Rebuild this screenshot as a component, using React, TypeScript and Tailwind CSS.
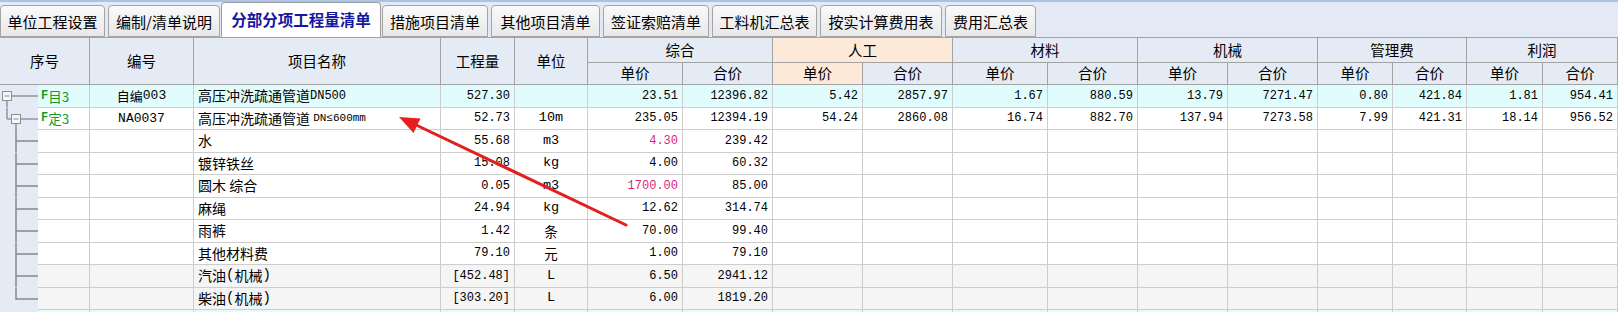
import React from 'react'

const COLS =
  'grid grid-cols-[90px_104px_247px_74px_73px_95px_90px_90px_90px_95px_90px_90px_90px_75px_74px_76px_75px]'

const CJK = "font-['Noto_Sans_CJK_SC',sans-serif]"
const MONO = "font-['Liberation_Mono','Noto_Sans_CJK_SC',monospace]"

const tabs = [
  { label: '单位工程设置', w: 'w-[105px]' },
  { label: '编制/清单说明', w: 'w-[112px]' },
  { label: '分部分项工程量清单', w: 'w-[160px]', active: true },
  { label: '措施项目清单', w: 'w-[106px]' },
  { label: '其他项目清单', w: 'w-[109px]' },
  { label: '签证索赔清单', w: 'w-[106px]' },
  { label: '工料机汇总表', w: 'w-[105px]' },
  { label: '按实计算费用表', w: 'w-[122px]' },
  { label: '费用汇总表', w: 'w-[91px]' },
]

const groups = ['综合', '人工', '材料', '机械', '管理费', '利润']

type Row = {
  tree: 'root' | 'child' | 'leaf' | 'last'
  seq?: string
  code?: React.ReactNode
  name: React.ReactNode
  qty: string
  unit?: React.ReactNode
  vals: string[]
  pink?: number[]
  bg: string
}

const rows: Row[] = [
  {
    tree: 'root',
    seq: 'F目3',
    code: (
      <>
        <span className={CJK}>自编</span>
        <span className={MONO}>003</span>
      </>
    ),
    name: (
      <>
        高压冲洗疏通管道<span className={`${MONO} text-[12px]`}>DN500</span>
      </>
    ),
    qty: '527.30',
    vals: ['23.51', '12396.82', '5.42', '2857.97', '1.67', '880.59', '13.79', '7271.47', '0.80', '421.84', '1.81', '954.41'],
    bg: 'bg-[#e0fcfc]',
  },
  {
    tree: 'child',
    seq: 'F定3',
    code: <span className={MONO}>NA0037</span>,
    name: (
      <>
        高压冲洗疏通管道 <span className={`${MONO} text-[11px]`}>DN≤600mm</span>
      </>
    ),
    qty: '52.73',
    unit: <span className={MONO}>10m</span>,
    vals: ['235.05', '12394.19', '54.24', '2860.08', '16.74', '882.70', '137.94', '7273.58', '7.99', '421.31', '18.14', '956.52'],
    bg: 'bg-white',
  },
  { tree: 'leaf', name: '水', qty: '55.68', unit: <span className={MONO}>m3</span>, vals: ['4.30', '239.42'], pink: [0], bg: 'bg-white' },
  { tree: 'leaf', name: '镀锌铁丝', qty: '15.08', unit: <span className={MONO}>kg</span>, vals: ['4.00', '60.32'], bg: 'bg-white' },
  { tree: 'leaf', name: '圆木 综合', qty: '0.05', unit: <span className={MONO}>m3</span>, vals: ['1700.00', '85.00'], pink: [0], bg: 'bg-white' },
  { tree: 'leaf', name: '麻绳', qty: '24.94', unit: <span className={MONO}>kg</span>, vals: ['12.62', '314.74'], bg: 'bg-white' },
  { tree: 'leaf', name: '雨裤', qty: '1.42', unit: '条', vals: ['70.00', '99.40'], bg: 'bg-white' },
  { tree: 'leaf', name: '其他材料费', qty: '79.10', unit: '元', vals: ['1.00', '79.10'], bg: 'bg-white' },
  {
    tree: 'leaf',
    name: (
      <>
        汽油<span className={MONO}>(</span>机械<span className={MONO}>)</span>
      </>
    ),
    qty: '[452.48]',
    unit: <span className={MONO}>L</span>,
    vals: ['6.50', '2941.12'],
    bg: 'bg-[#f5f5f5]',
  },
  {
    tree: 'last',
    name: (
      <>
        柴油<span className={MONO}>(</span>机械<span className={MONO}>)</span>
      </>
    ),
    qty: '[303.20]',
    unit: <span className={MONO}>L</span>,
    vals: ['6.00', '1819.20'],
    bg: 'bg-[#f5f5f5]',
  },
]

function Tree({ kind }: { kind: Row['tree'] | 'none' }) {
  const s = '#8e8e8e'
  return (
    <svg width="38" height="22.5" viewBox="0 0 38 22.5" className="block">
      {kind === 'root' && (
        <>
          <rect x="2.5" y="6.5" width="9" height="9" fill="#f4f6fa" stroke={s} />
          <line x1="4.5" y1="11" x2="9.5" y2="11" stroke={s} />
          <line x1="12" y1="11" x2="38" y2="11" stroke={s} strokeWidth="1.4" />
          <line x1="7" y1="16" x2="7" y2="22.5" stroke={s} strokeWidth="1.4" />
        </>
      )}
      {kind === 'child' && (
        <>
          <line x1="7" y1="0" x2="7" y2="11" stroke={s} strokeWidth="1.4" />
          <line x1="7" y1="11" x2="11.5" y2="11" stroke={s} strokeWidth="1.4" />
          <rect x="11.5" y="6.5" width="9" height="9" fill="#f4f6fa" stroke={s} />
          <line x1="13.5" y1="11" x2="18.5" y2="11" stroke={s} />
          <line x1="21" y1="11" x2="38" y2="11" stroke={s} strokeWidth="1.4" />
          <line x1="16" y1="16" x2="16" y2="22.5" stroke={s} strokeWidth="1.4" />
        </>
      )}
      {(kind === 'leaf' || kind === 'last') && (
        <>
          <line x1="16" y1="0" x2="16" y2={kind === 'last' ? 11.7 : 22.5} stroke={s} strokeWidth="1.6" />
          <line x1="16" y1="11" x2="38" y2="11" stroke={s} strokeWidth="1.6" />
        </>
      )}
    </svg>
  )
}

function DataRow({ r }: { r: Row }) {
  const cell = `h-[22.5px] border-r border-b border-[#cdcdcd] ${r.bg} flex items-center`
  const vals = Array.from({ length: 12 }, (_, i) => r.vals[i] ?? '')
  return (
    <div className={`${COLS} text-black`}>
      <div className="flex h-[22.5px]">
        <div className="w-[38px] bg-[#e4ebf5]">
          <Tree kind={r.tree} />
        </div>
        <div className={`flex-1 border-r border-b border-[#cdcdcd] ${r.bg} flex items-center pl-[3px] text-[13.5px] text-[#1c9a1c] ${CJK}`}>
          {r.seq && (
            <>
              <span className={`${MONO} text-[12px] font-bold`}>F</span>
              {r.seq.slice(1, 2)}
              <span>{r.seq.slice(2)}</span>
            </>
          )}
        </div>
      </div>
      <div className={`${cell} justify-center text-[13px] ${CJK}`}>{r.code}</div>
      <div className={`${cell} pl-[4px] text-[14px] whitespace-pre ${CJK}`}>{r.name}</div>
      <div className={`${cell} justify-end pr-[4px] text-[12px] ${MONO}`}>{r.qty}</div>
      <div className={`${cell} justify-center text-[13.5px] ${CJK}`}>{r.unit}</div>
      {vals.map((v, i) => (
        <div
          key={i}
          className={`${cell} justify-end pr-[4px] text-[12px] ${MONO} ${r.pink?.includes(i) ? 'text-[#dc1f7c]' : ''}`}
        >
          {v}
        </div>
      ))}
    </div>
  )
}

export default function App() {
  const hd = `border-r border-b border-[#a3a3a3] flex items-center justify-center text-[14.5px] ${CJK} leading-none`
  return (
    <div className="relative h-[312px] w-[1618px] overflow-hidden bg-white">
      {/* tab strip */}
      <div className="flex h-[37px] items-end gap-[3px] border-t-2 border-[#a9c3e6] bg-[#e4eaf5] pl-0">
        {tabs.map((t) =>
          t.active ? (
            <div
              key={t.label}
              className={`${t.w} -mx-[2px] flex h-[35px] items-center justify-center rounded-t-[4px] border border-b-0 border-[#9c9c9c] bg-white text-[15.5px] font-bold text-[#1616a0] ${CJK} leading-none`}
            >
              {t.label}
            </div>
          ) : (
            <div
              key={t.label}
              className={`${t.w} flex h-[32px] items-center justify-center rounded-t-[4px] border border-[#a4a4a4] bg-gradient-to-b from-[#fafafa] to-[#e8e8e8] text-[15px] text-black ${CJK} leading-none`}
            >
              {t.label}
            </div>
          )
        )}
      </div>

      {/* header */}
      <div className={`${COLS} grid-rows-[25px_22px] border-t border-[#a3a3a3] bg-[#e4ebf5] text-black`}>
        <div className={`${hd} row-span-2`}>序号</div>
        <div className={`${hd} row-span-2`}>编号</div>
        <div className={`${hd} row-span-2`}>项目名称</div>
        <div className={`${hd} row-span-2`}>工程量</div>
        <div className={`${hd} row-span-2`}>单位</div>
        {groups.map((g) => (
          <div key={g} className={`${hd} col-span-2 ${g === '人工' ? 'bg-[#fde9d8]' : ''}`}>
            {g}
          </div>
        ))}
        {groups.map((g) => (
          <React.Fragment key={g}>
            <div className={`${hd} ${g === '人工' ? 'bg-[#fde9d8]' : ''}`}>单价</div>
            <div className={hd}>合价</div>
          </React.Fragment>
        ))}
      </div>

      {/* body */}
      {rows.map((r, i) => (
        <DataRow key={i} r={r} />
      ))}
      <div className={COLS}>
        <div className="flex h-[22.5px]">
          <div className="w-[38px] bg-[#e4ebf5]" />
          <div className="flex-1 border-r border-[#cdcdcd] bg-[#e0fcfc]" />
        </div>
        {Array.from({ length: 16 }, (_, i) => (
          <div key={i} className="h-[22.5px] border-r border-[#cdcdcd] bg-[#e0fcfc]" />
        ))}
      </div>

      {/* red annotation arrow */}
      <svg className="pointer-events-none absolute left-0 top-0" width="1618" height="312" viewBox="0 0 1618 312">
        <line x1="626" y1="225" x2="414" y2="124" stroke="#e3201e" strokeWidth="3" strokeLinecap="round" />
        <polygon points="399,117 420.5,118.5 413.5,133" fill="#e3201e" />
      </svg>
    </div>
  )
}
